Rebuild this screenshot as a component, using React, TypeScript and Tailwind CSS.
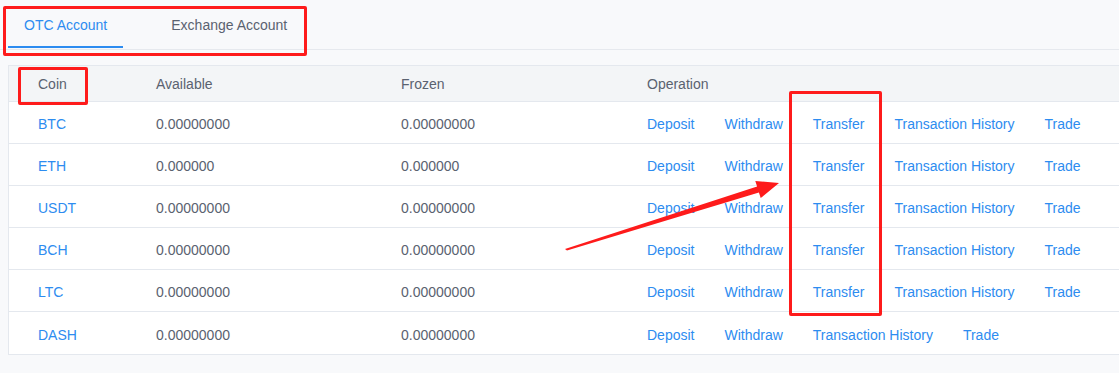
const coins = [
  { name: 'BTC', available: '0.00000000', frozen: '0.00000000', transfer: true },
  { name: 'ETH', available: '0.000000', frozen: '0.000000', transfer: true },
  { name: 'USDT', available: '0.00000000', frozen: '0.00000000', transfer: true },
  { name: 'BCH', available: '0.00000000', frozen: '0.00000000', transfer: true },
  { name: 'LTC', available: '0.00000000', frozen: '0.00000000', transfer: true },
  { name: 'DASH', available: '0.00000000', frozen: '0.00000000', transfer: false },
];

export default function App() {
  return (
    <div className="relative w-[1119px] h-[373px] overflow-hidden bg-[#f8f9fb] text-[14px] text-[#5a6270] font-['Liberation_Sans',Arial,sans-serif]">
      {/* Tabs */}
      <div className="flex h-[50px] border-b border-[#e6e9ee] pl-2">
        <div className="relative px-4 pt-[16px] text-[#2d8cf0] leading-[18px]">
          OTC Account
          <div className="absolute left-0 right-0 top-[46px] h-[2px] bg-[#2d8cf0]" />
        </div>
        <div className="ml-8 px-4 pt-[16px] leading-[18px] text-[#5a6270]">Exchange Account</div>
      </div>

      {/* Table */}
      <div className="ml-2 mt-[15px] w-[1140px] border border-[#e4e8ee] bg-white">
        <div className="grid grid-cols-[147px_245px_246px_1fr] h-[36px] pt-[2px] items-center bg-[#f3f5f7] border-b border-[#e4e8ee]">
          <div className="pl-[29px]">Coin</div>
          <div>Available</div>
          <div>Frozen</div>
          <div>Operation</div>
        </div>
        {coins.map((c, i) => (
          <div
            key={c.name}
            className={`grid grid-cols-[147px_245px_246px_1fr] h-[42px] pt-[4px] items-center ${i < coins.length - 1 ? 'border-b border-[#e4e8ee]' : ''}`}
          >
            <div className="pl-[29px] text-[#2d8cf0]">{c.name}</div>
            <div>{c.available}</div>
            <div>{c.frozen}</div>
            <div className="flex gap-[30px] text-[#2d8cf0]">
              <span>Deposit</span>
              <span>Withdraw</span>
              {c.transfer && <span>Transfer</span>}
              <span>Transaction History</span>
              <span>Trade</span>
            </div>
          </div>
        ))}
      </div>

      {/* Annotations */}
      <div className="absolute left-[3px] top-[6px] w-[304px] h-[50px] border-[3px] border-[#fe1b1b] rounded-[2px] pointer-events-none" />
      <div className="absolute left-[18px] top-[67px] w-[70px] h-[38px] border-[3px] border-[#fe1b1b] rounded-[2px] pointer-events-none" />
      <div className="absolute left-[789px] top-[91px] w-[93px] h-[225px] border-[3px] border-[#fe1b1b] rounded-[2px] pointer-events-none" />
      <svg className="absolute left-0 top-0 pointer-events-none" width="1119" height="373">
        <polygon
          points="565,249 757.1,186.6 755.3,180.9 779,183 760.7,198.1 758.9,192.4 567,250.6"
          fill="#fe1b1b"
        />
      </svg>
    </div>
  );
}
